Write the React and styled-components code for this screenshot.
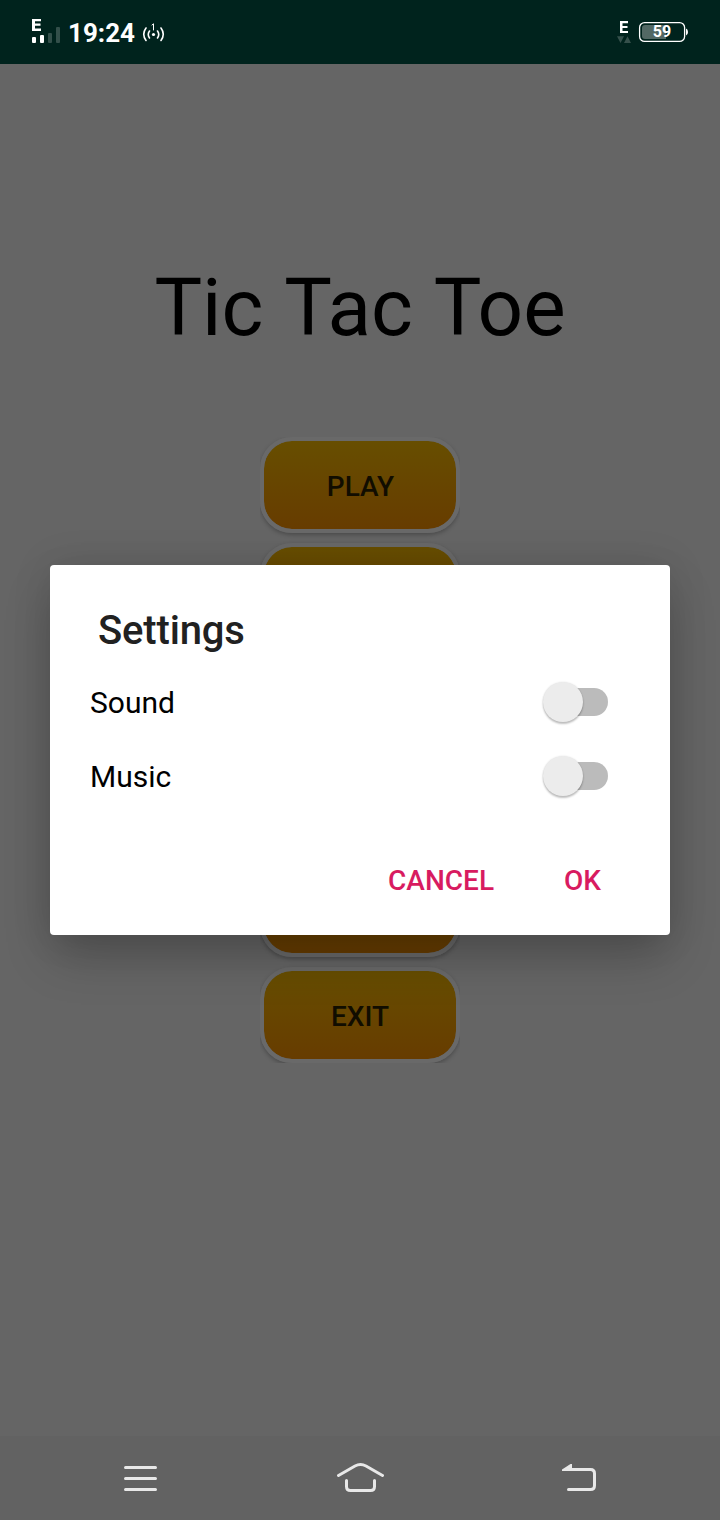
import React from "react";
import styled, { createGlobalStyle } from "styled-components";

const GlobalStyle = createGlobalStyle`
  * { box-sizing: border-box; }
  body { margin: 0; font-family: Roboto, "Liberation Sans", sans-serif; background: #656565; }
`;

const Screen = styled.div`
  position: relative;
  width: 720px;
  height: 1520px;
  overflow: hidden;
  display: flex;
  flex-direction: column;
  background: #656565;
`;

const StatusBar = styled.header`
  height: 64px;
  flex: none;
  display: flex;
  justify-content: space-between;
  padding: 0 30px;
  background: #00231d;
  color: #fff;
`;

const StatusGroup = styled.div`
  display: flex;
  align-items: center;
`;

const Clock = styled.span`
  width: 68px;
  margin-left: 6px;
  padding-top: 2px;
  font-size: 26px;
  line-height: 30px;
  font-weight: 700;
`;

const HotspotIcon = styled.svg`
  margin-left: 6px;
`;

const Home = styled.main`
  flex: 1;
  display: flex;
  flex-direction: column;
  align-items: center;
  padding-top: 197px;
`;

const Title = styled.h1`
  margin: 0;
  font-size: 80px;
  line-height: 94px;
  font-weight: 400;
  word-spacing: 2.5px;
  white-space: nowrap;
  color: #000;
`;

const Menu = styled.nav`
  margin-top: 82px;
  display: flex;
  flex-direction: column;
  gap: 10px;
  overflow: hidden;
`;

const MenuButton = styled.button`
  width: 200px;
  height: 96px;
  padding: 3px 0 0 ${(p) => p.$nudge || 0}px;
  border: 4px solid #696969;
  border-radius: 32px;
  background: linear-gradient(#674e00, #673c00) padding-box;
  box-shadow: 0 2px 4px rgba(0, 0, 0, 0.26);
  font: 500 28px/35px Roboto, "Liberation Sans", sans-serif;
  color: #110d00;
`;

const NavBar = styled.footer`
  height: 84px;
  flex: none;
  display: flex;
  justify-content: space-around;
  align-items: center;
  padding: 0 30px;
  background: #626262;
`;

const Dialog = styled.section`
  position: absolute;
  left: 50px;
  top: 565px;
  width: 620px;
  height: 370px;
  padding: 42px 62px 0 40px;
  border-radius: 4px;
  background: #fff;
  box-shadow: 0 24px 46px -4px rgba(0, 0, 0, 0.24), 0 0 40px rgba(0, 0, 0, 0.1);
`;

const DialogTitle = styled.h2`
  margin: 0 0 11px 8px;
  font-size: 40px;
  line-height: 47px;
  font-weight: 500;
  letter-spacing: -0.15px;
  color: #212121;
`;

const SettingRow = styled.div`
  height: 74px;
  display: flex;
  justify-content: space-between;
  align-items: center;
  font-size: 30px;
  line-height: 36px;
  color: #000;
`;

const SettingLabel = styled.span`
  padding-top: 2px;
`;

const Track = styled.div`
  width: 56px;
  height: 28px;
  display: flex;
  align-items: center;
  border-radius: 14px;
  background: #bbb;
`;

const Thumb = styled.div`
  width: 40px;
  height: 40px;
  flex: none;
  margin-left: -9px;
  border-radius: 50%;
  background: #ececec;
  box-shadow: 0 2px 2px rgba(0, 0, 0, 0.24), 0 0 2px rgba(0, 0, 0, 0.12);
`;

const Actions = styled.div`
  margin-top: 51px;
  display: flex;
  justify-content: flex-end;
  gap: 70px;
  padding-right: 7px;
`;

const ActionButton = styled.button`
  padding: 0;
  border: 0;
  background: none;
  font: 500 28px/34px Roboto, "Liberation Sans", sans-serif;
  color: #d81b60;
`;

function Setting({ label }) {
  return (
    <SettingRow>
      <SettingLabel>{label}</SettingLabel>
      <Track><Thumb /></Track>
    </SettingRow>
  );
}

export default function App() {
  return (
    <>
      <GlobalStyle />
      <Screen>
        <StatusBar>
          <StatusGroup>
            <svg width="32" height="64" viewBox="30 0 32 64" fill="#fff">
              <path d="M32 19h9v2.300h-6v2.300h5.500v2.200H35v2.700h6V31h-9z" />
              <rect x="32" y="37" width="4" height="6" rx="1" />
              <rect x="40" y="35" width="4" height="8" rx="1" />
              <rect x="48" y="33" width="4" height="10" rx="1" opacity=".2" />
              <rect x="56" y="27" width="4" height="16" rx="1" opacity=".2" />
            </svg>
            <Clock>19:24</Clock>
            <HotspotIcon width="24" height="64" viewBox="142 0 24 64" fill="none" stroke="#fff" strokeWidth="1.6" strokeLinecap="round">
              <path d="M146 28q-4.500 6.200 0 12.500M149.500 31q-2.500 3.500 0 7M161 28q4.500 6.200 0 12.500M157.500 31q2.500 3.500 0 7" />
              <path d="M152 25l1.500-1.200v6.200" strokeWidth="1" />
              <circle cx="153.500" cy="34.500" r="1.600" fill="#fff" stroke="none" />
            </HotspotIcon>
          </StatusGroup>
          <StatusGroup>
            <svg width="74" height="64" viewBox="616 0 74 64">
              <path fill="#fff" d="M620 21h8v2.200h-5.500v2.700h5v2.100h-5v2.900h5.500V33h-8z" />
              <path fill="#35504b" d="M617 36.300h7l-3.500 6.700zM624 43h7l-3.500-6.700z" />
              <rect x="639.600" y="22.600" width="45" height="18.800" rx="5" fill="none" stroke="#fff" strokeWidth="1.300" />
              <path d="M645 25h21v14h-21q-3 0-3-3v-8q0-3 3-3z" fill="#526864" />
              <path d="M686 28.500q2 .5 2 3.500t-2 3.500z" fill="#fff" />
              <text x="662" y="37.300" textAnchor="middle" fill="#fff" fontFamily="Roboto, sans-serif" fontWeight="700" fontSize="16">59</text>
            </svg>
          </StatusGroup>
        </StatusBar>
        <Home>
          <Title>Tic Tac Toe</Title>
          <Menu>
            <MenuButton $nudge={1}>PLAY</MenuButton>
            <MenuButton />
            <MenuButton />
            <MenuButton />
            <MenuButton />
            <MenuButton>EXIT</MenuButton>
          </Menu>
        </Home>
        <NavBar>
          <svg width="48" height="40" viewBox="116 1458 48 40" stroke="#e8e8e8" strokeWidth="3" strokeLinecap="round">
            <path d="M125.500 1467.500h30M125.500 1478.500h30M125.500 1489.500h30" />
          </svg>
          <svg width="48" height="40" viewBox="336 1458 48 40" fill="none" stroke="#e8e8e8" strokeWidth="3" strokeLinecap="round">
            <path d="M338.500 1475.500L355 1466q5.500-3 11 0l16.500 9.500M346.500 1480.500v6q0 4 4 4h20q4 0 4-4v-6" />
          </svg>
          <svg width="48" height="40" viewBox="556 1458 48 40" fill="none" stroke="#e8e8e8" strokeWidth="3" strokeLinecap="round">
            <path d="M568.500 1489.500h22q4 0 4-4v-12q0-4-4-4H572" />
            <path d="M562 1471v-1.500l8.500-5.500h1.500v7z" fill="#e8e8e8" stroke="none" />
          </svg>
        </NavBar>
        <Dialog>
          <DialogTitle>Settings</DialogTitle>
          <Setting label="Sound" />
          <Setting label="Music" />
          <Actions>
            <ActionButton>CANCEL</ActionButton>
            <ActionButton>OK</ActionButton>
          </Actions>
        </Dialog>
      </Screen>
    </>
  );
}
